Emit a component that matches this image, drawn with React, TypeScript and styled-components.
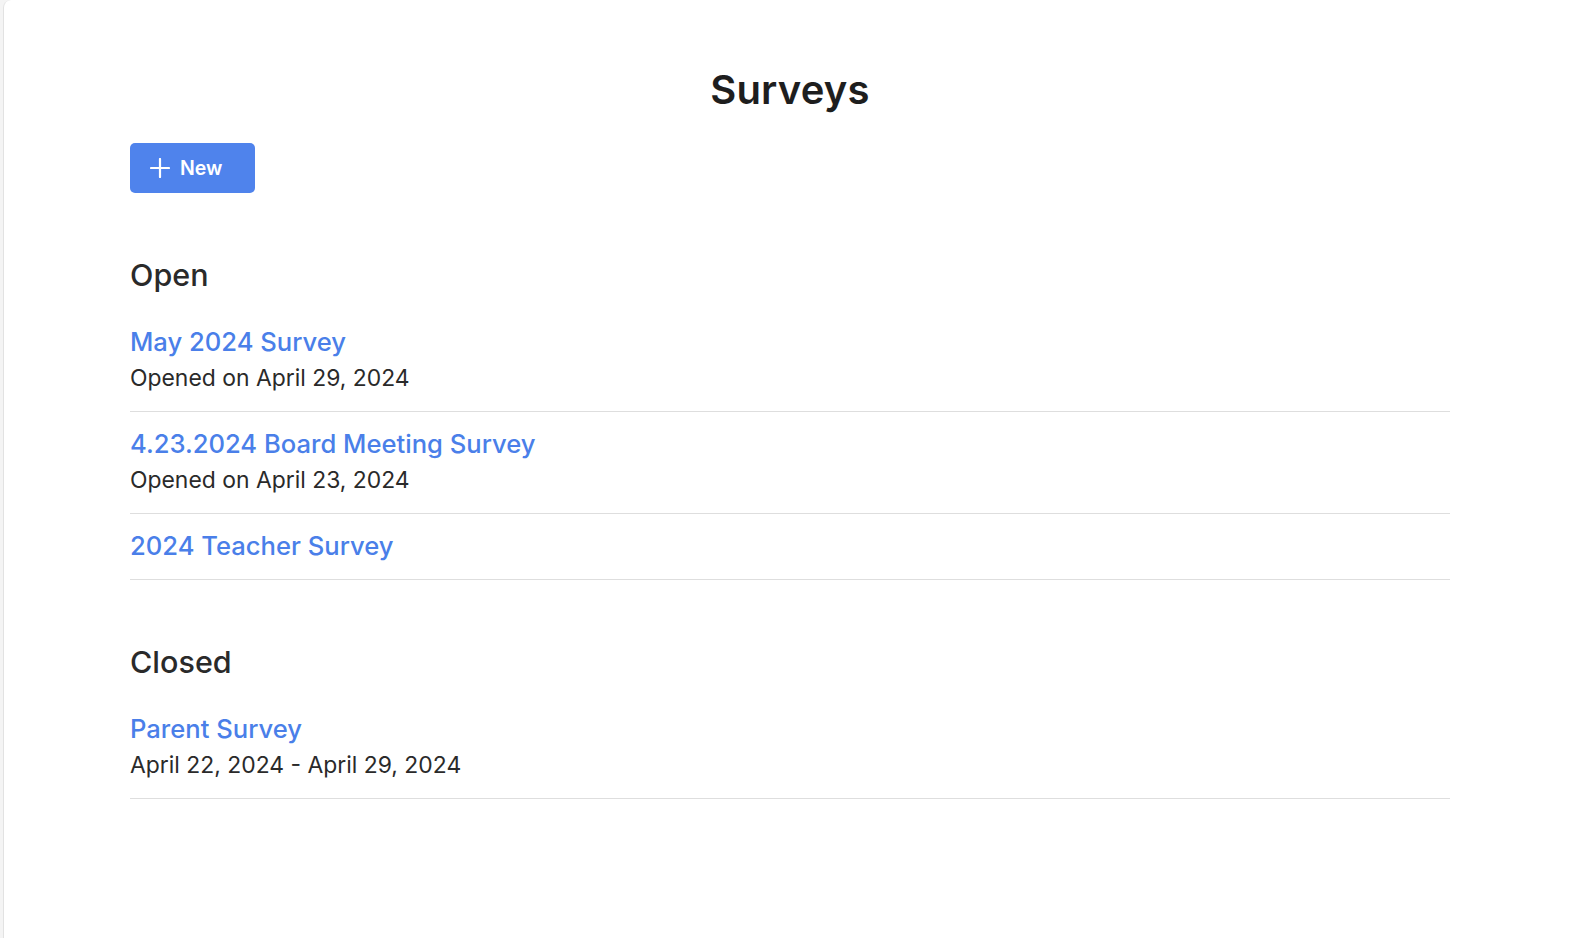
import React from 'react';
import styled, { createGlobalStyle } from 'styled-components';

const GlobalStyle = createGlobalStyle`
  html, body {
    margin: 0;
    padding: 0;
    background: #f4f4f4;
    font-family: Inter, "Noto Sans", "Liberation Sans", sans-serif;
    overflow: hidden;
  }
`;

const Card = styled.div`
  margin-left: 3px;
  min-height: 938px;
  background: #ffffff;
  border-left: 1px solid #e2e2e2;
  border-radius: 8px 0 0 0;
`;

const Content = styled.main`
  max-width: 1320px;
  margin: 0 auto;
  padding-top: 66px;
`;

const Title = styled.h1`
  margin: 0;
  text-align: center;
  font-size: 40px;
  line-height: 48px;
  font-weight: 600;
  color: #1e1e1e;
  letter-spacing: 0.2px;
`;

const NewButton = styled.button`
  display: flex;
  align-items: center;
  gap: 10px;
  width: 125px;
  height: 50px;
  margin-top: 29px;
  padding: 0 0 0 20px;
  border: none;
  border-radius: 5px;
  background: #4f83ec;
  color: #ffffff;
  font-family: inherit;
  font-size: 19.5px;
  font-weight: 600;
  cursor: pointer;
`;

const Section = styled.section`
  margin-top: 64px;
`;

const SectionTitle = styled.h2`
  margin: 0 0 17px;
  font-size: 30.5px;
  line-height: 36px;
  font-weight: 500;
  color: #2a2a2a;
`;

const Row = styled.div`
  padding: 14px 0 15px;
  border-bottom: 1px solid #dedede;
`;

const SurveyLink = styled.a`
  display: block;
  font-size: 25.6px;
  line-height: 36px;
  font-weight: 500;
  color: #4a7fe9;
  text-decoration: none;
`;

const Meta = styled.div`
  font-size: 22.9px;
  line-height: 36px;
  color: #2a2a2a;
`;

const PlusIcon = () => (
  <svg width="20" height="20" viewBox="0 0 20 20" fill="none">
    <path d="M10 1v18M1 10h18" stroke="#fff" strokeWidth="2.2" strokeLinecap="round" />
  </svg>
);

type Survey = { title: string; meta?: string };

const openSurveys: Survey[] = [
  { title: 'May 2024 Survey', meta: 'Opened on April 29, 2024' },
  { title: '4.23.2024 Board Meeting Survey', meta: 'Opened on April 23, 2024' },
  { title: '2024 Teacher Survey' },
];

const closedSurveys: Survey[] = [
  { title: 'Parent Survey', meta: 'April 22, 2024 - April 29, 2024' },
];

const SurveyList = ({ heading, items }: { heading: string; items: Survey[] }) => (
  <Section>
    <SectionTitle>{heading}</SectionTitle>
    {items.map((s) => (
      <Row key={s.title}>
        <SurveyLink href="#">{s.title}</SurveyLink>
        {s.meta && <Meta>{s.meta}</Meta>}
      </Row>
    ))}
  </Section>
);

const App = () => (
  <>
    <GlobalStyle />
    <Card>
      <Content>
        <Title>Surveys</Title>
        <NewButton type="button">
          <PlusIcon />
          New
        </NewButton>
        <SurveyList heading="Open" items={openSurveys} />
        <SurveyList heading="Closed" items={closedSurveys} />
      </Content>
    </Card>
  </>
);

export default App;
